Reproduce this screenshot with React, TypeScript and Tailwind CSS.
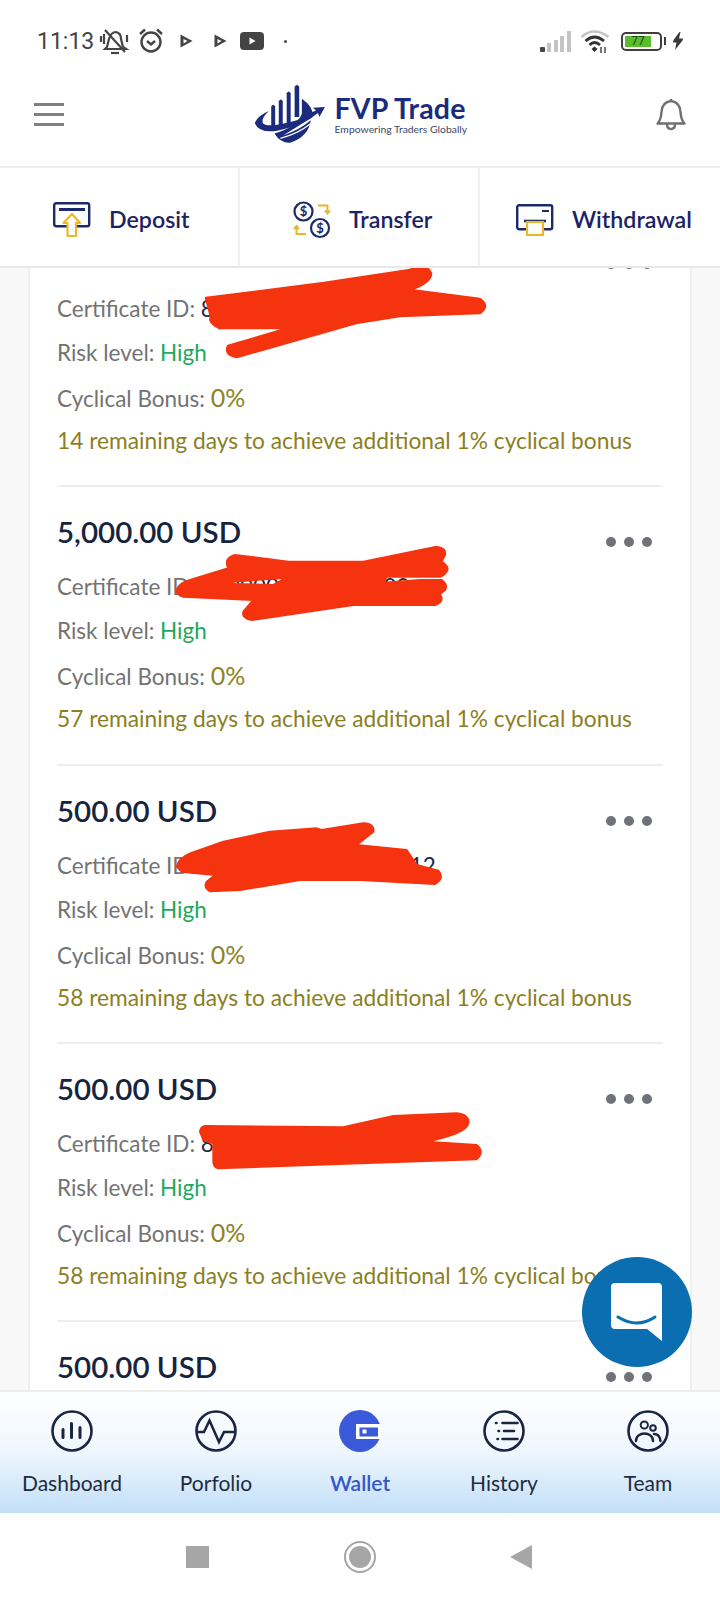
import React from "react";

const rows = [
  { amount: "", id: "8000000000000000", days: 14 },
  { amount: "5,000.00 USD", id: "8000000000000000", days: 57 },
  { amount: "500.00 USD", id: "800000000000000012", days: 58 },
  { amount: "500.00 USD", id: "8000000000000000", days: 58 },
  { amount: "500.00 USD", id: "", days: 0 },
];

const D = "#1a2540";

function Row({ amount, id, days }: { amount: string; id: string; days: number }) {
  return (
    <div className="box-border h-[278.33px] border-b-2 border-[#eeeeee] pt-[26px]">
      <div className="flex h-[38px] items-start justify-between">
        <div className="text-[29.5px] leading-[38px] font-semibold text-[#16243f]">{amount}</div>
        <div className="mt-[24px] mr-[11px] flex gap-[8px]">
          <span className="h-[10px] w-[10px] rounded-full bg-[#6f7377]" />
          <span className="h-[10px] w-[10px] rounded-full bg-[#6f7377]" />
          <span className="h-[10px] w-[10px] rounded-full bg-[#6f7377]" />
        </div>
      </div>
      {id && (
        <div className="mt-[14px] text-[22.5px] leading-[44px] text-[#737373]">
          <div className="h-[44px]">
            Certificate ID: <span className="text-[#1f2a40]">{id}</span>
          </div>
          <div className="h-[44px]">
            Risk level: <span className="text-[#22a85c]">High</span>
          </div>
          <div className="h-[44px]">
            Cyclical Bonus: <span className="text-[25px] text-[#8b8326]">0%</span>
          </div>
          <div className="h-[44px] text-[22.75px] whitespace-nowrap text-[#8b7f1f]">
            {days} remaining days to achieve additional 1% cyclical bonus
          </div>
        </div>
      )}
    </div>
  );
}

function Scribbles() {
  const c = "#f5340f";
  return (
    <svg className="absolute top-0 left-0" width="720" height="1122" viewBox="0 268 720 1122">
      <path
        fill={c}
        stroke={c}
        strokeWidth="2.5"
        strokeLinejoin="round"
        d="M206 298 L324 283 L410 270 Q425 262 431 273 Q432 282 410 290 L480 299 Q490 306 480 313 L400 316 L356 323 L237 357 Q224 355 228 346 L289 328 L219 328 Q208 322 211 317 Z"
      />
      <g transform="translate(160 530) scale(0.3333)" stroke={c} strokeWidth="6" strokeLinejoin="round">
        <path
          fill={c}
          fillRule="evenodd"
          d="M50 180 Q55 160 90 150 L205 115 Q190 85 225 75 L385 95 L610 95 L830 50 Q860 55 855 75 L845 95 Q870 110 860 125 Q850 138 840 140 L680 140 L670 158 L780 150 L845 150 Q865 165 855 180 L840 192 Q855 215 825 225 L580 225 L275 270 Q245 265 250 245 L280 210 L70 200 Q50 195 50 180 Z M215 155 L380 143 L340 165 L225 162 Z"
        />
      </g>
      <g transform="translate(160 800) scale(0.3333)" stroke={c} strokeWidth="6" strokeLinejoin="round">
        <path
          fill={c}
          d="M50 200 Q55 175 90 160 L190 125 L330 95 L470 85 L485 90 L610 70 Q645 72 640 95 L590 135 L740 150 L770 195 L835 212 Q855 235 825 252 L600 240 L420 240 L240 270 L150 274 Q130 262 140 245 L165 225 L65 215 Z"
        />
      </g>
      <g transform="translate(160 1090) scale(0.3333)" stroke={c} strokeWidth="6" strokeLinejoin="round">
        <path
          fill={c}
          d="M120 125 Q122 110 135 108 L550 112 L700 78 L890 70 Q930 75 925 100 Q920 130 800 155 L950 165 Q975 185 950 208 L600 220 L175 235 Q160 230 160 215 L160 160 L130 150 Z"
        />
      </g>
    </svg>
  );
}

function StatusLeft() {
  const s = "#444444";
  return (
    <div className="flex items-center">
      <span className="w-[58px] font-['Roboto'] text-[23px] leading-none text-[#444444]">11:13</span>
      <svg width="32" height="28" viewBox="0 0 32 28" className="ml-[3px]" fill="none" stroke={s} strokeWidth="2.2">
        <path d="M9 20 L11 12 Q13 5 18 5 Q23 6 23 12 L25 20 L28 22 L7 22 Z" />
        <path d="M13 26 H21" />
        <path d="M7 3 L27 25" />
        <path d="M3 9 V15 M6 7 V17 M29 8 V15" />
      </svg>
      <svg width="26" height="26" viewBox="0 0 26 26" className="ml-[8px]" fill="none" stroke={s} strokeWidth="2.4">
        <circle cx="13" cy="14" r="9.5" />
        <path d="M9 13 L13 16.5 L17 13" />
        <path d="M2 6 L7 1.5 M24 6 L19 1.5" />
      </svg>
      <svg width="13" height="14" viewBox="0 0 13 14" className="ml-[16px]">
        <path d="M0.5 0.5 L12.5 7 L0.5 13.5 Z M3.5 5 V9.5 L7.5 7 Z" fill={s} fillRule="evenodd" />
      </svg>
      <svg width="13" height="14" viewBox="0 0 13 14" className="ml-[21px]">
        <path d="M0.5 0.5 L12.5 7 L0.5 13.5 Z M3.5 5 V9.5 L7.5 7 Z" fill={s} fillRule="evenodd" />
      </svg>
      <svg width="24" height="18" viewBox="0 0 24 18" className="ml-[13px]">
        <rect width="24" height="18" rx="4" fill={s} />
        <path d="M9.5 5.5 L15.5 9 L9.5 12.5 Z" fill="#ffffff" />
      </svg>
      <span className="ml-[20px] h-[3px] w-[3px] rounded-full bg-[#444444]" />
    </div>
  );
}

function StatusRight() {
  return (
    <div className="flex items-center">
      <svg width="31" height="21" viewBox="0 0 31 21">
        <rect x="0" y="16" width="5" height="5" rx="1" fill="#444444" />
        <rect x="7" y="12" width="4" height="9" fill="#c4c4c4" />
        <rect x="14" y="9" width="4" height="12" fill="#c4c4c4" />
        <rect x="20" y="5" width="4" height="16" fill="#c4c4c4" />
        <rect x="27" y="0" width="4" height="21" fill="#c4c4c4" />
      </svg>
      <svg width="30" height="24" viewBox="0 0 30 24" className="ml-[9px]" fill="none">
        <path d="M1.5 8 Q14 -3 28.5 8" stroke="#c4c4c4" strokeWidth="2.6" />
        <path d="M5.5 12 Q14.5 4 24 12" stroke="#333333" strokeWidth="2.8" />
        <path d="M9.5 16 Q14.5 11 20 16" stroke="#333333" strokeWidth="2.8" />
        <path d="M11.5 20 L14.5 17.5 L17.5 20 L14.5 23 Z" fill="#333333" />
        <path d="M21 18 V24 M25 18 V24" stroke="#555555" strokeWidth="1.6" />
      </svg>
      <div className="ml-[11px] flex items-center">
        <div className="box-border flex h-[19px] w-[41px] items-center rounded-[5px] border-[2.5px] border-[#3f3f3f] p-[2px]">
          <div className="flex h-full w-[26px] items-center justify-center bg-[#5bbd2e] font-['Roboto'] text-[12px] leading-none text-[#14500c]">
            77
          </div>
        </div>
        <span className="ml-[2px] h-[8px] w-[2px] bg-[#3f3f3f]" />
      </div>
      <svg width="10" height="18" viewBox="0 0 10 18" className="ml-[7px]">
        <path d="M6.5 0 L0.5 8 L0 10.5 H3.5 L2 18 L9.5 8.5 L10 6.5 H6 L7.5 0 Z" fill="#3a3a3a" />
      </svg>
    </div>
  );
}

function Logo() {
  const c = "#1b2b7d";
  return (
    <div className="flex h-[60px] w-[213px] items-center">
      <svg width="72" height="60" viewBox="40 40 218 182" className="shrink-0">
        <g fill={c}>
          <path d="M92 108 Q98 98 104 108 V172 H92 Z" />
          <path d="M115 92 Q121 82 127 92 V165 H115 Z" />
          <path d="M139 68 Q145 58 151 68 V158 H139 Z" />
          <path d="M163 48 Q170 38 177 48 V140 H163 Z" />
          <path d="M185 85 Q222 110 218 140 L128 196 Q180 178 212 150 Q205 200 150 218 Q120 220 102 190 Q170 170 185 130 Z" />
          <path d="M42 158 Q52 135 85 122 Q62 142 66 158 Q80 176 170 150 L228 120 L218 112 L255 110 L238 140 L234 128 Q190 165 110 182 Q55 190 42 158 Z" />
        </g>
        <path d="M120 205 Q175 190 212 160" stroke="#ffffff" strokeWidth="4" fill="none" />
      </svg>
      <div className="ml-[9px] flex flex-col">
        <span className="text-[28.5px] leading-[30px] font-bold tracking-[0.2px] whitespace-nowrap text-[#1b2b7d]">FVP Trade</span>
        <span className="text-[10.4px] leading-[12px] whitespace-nowrap text-[#3d4668]">Empowering Traders Globally</span>
      </div>
    </div>
  );
}

function ActionItem({ icon, label, cls }: { icon: React.ReactNode; label: string; cls: string }) {
  return (
    <div className={`-mt-[6px] flex items-center border-r-2 border-[#f0f0f0] pt-[6px] last:border-r-0 ${cls}`}>
      {icon}
      <span className="text-[23.2px] leading-none font-semibold whitespace-nowrap text-[#1b2363]">{label}</span>
    </div>
  );
}

const DepositIcon = (
  <svg width="38" height="36" viewBox="0 0 38 36" className="mr-[18px] shrink-0" fill="none">
    <rect x="1.2" y="1.2" width="35" height="23" rx="2" stroke="#1b2a6b" strokeWidth="2.4" />
    <path d="M6 7.5 H32" stroke="#1b2a6b" strokeWidth="3" />
    <path d="M19 12 L10.5 21 H14.5 V34 H23 V21 H27 Z" fill="#ffffff" stroke="#eab72a" strokeWidth="2.2" strokeLinejoin="round" />
  </svg>
);

const TransferIcon = (
  <svg width="38" height="38" viewBox="0 0 38 38" className="mr-[18px] shrink-0" fill="none">
    <circle cx="10.5" cy="10.5" r="9" stroke="#1b2a6b" strokeWidth="2.2" />
    <circle cx="27" cy="27" r="9" stroke="#1b2a6b" strokeWidth="2.2" />
    <text x="10.5" y="15" textAnchor="middle" fontSize="13" fontWeight="700" fill="#1b2a6b" fontFamily="Lato">$</text>
    <text x="27" y="31.5" textAnchor="middle" fontSize="13" fontWeight="700" fill="#1b2a6b" fontFamily="Lato">$</text>
    <path d="M25 4.5 H34.5 V12 M32 9.5 L34.5 12.5 L37 9.5" stroke="#eab72a" strokeWidth="2" />
    <path d="M3.5 25 V33 H13 M1 28 L3.5 25 L6 28" stroke="#eab72a" strokeWidth="2" />
  </svg>
);

const WithdrawIcon = (
  <svg width="38" height="32" viewBox="0 0 38 32" className="mr-[18px] shrink-0" fill="none">
    <rect x="1.2" y="1.2" width="35" height="24" rx="2" stroke="#1b2a6b" strokeWidth="2.4" />
    <path d="M26 7 H33" stroke="#1b2a6b" strokeWidth="2" />
    <path d="M8 17 H30" stroke="#1b2a6b" strokeWidth="2.6" />
    <rect x="11" y="18" width="16" height="13" fill="#ffffff" stroke="#eab72a" strokeWidth="2.2" />
  </svg>
);

function NavItem({ icon, label, active }: { icon: React.ReactNode; label: string; active?: boolean }) {
  return (
    <div className="flex flex-col items-center">
      <div className="h-[42px] w-[42px]">{icon}</div>
      <span className={`mt-[15px] text-[21px] leading-[32px] ${active ? "font-semibold text-[#3456c8]" : "text-[#1f2b40]"}`}>{label}</span>
    </div>
  );
}

function Ring({ children }: { children?: React.ReactNode }) {
  return (
    <svg width="42" height="42" viewBox="0 0 42 42" fill="none" stroke={D} strokeWidth="2.6" strokeLinecap="round">
      <circle cx="21" cy="21" r="19.5" />
      {children}
    </svg>
  );
}

export default function App() {
  return (
    <div className="flex h-[1600px] w-[720px] flex-col overflow-hidden bg-white font-['Lato',sans-serif]">
      <div className="flex h-[70px] shrink-0 items-center justify-between pt-[12px] pr-[37px] pl-[37px]">
        <StatusLeft />
        <StatusRight />
      </div>

      <div className="box-border flex h-[98px] shrink-0 items-center justify-between border-b-2 border-[#eeeeee] px-[34px] pb-[8px]">
        <div className="flex h-[23px] w-[30px] flex-col justify-between">
          <span className="h-[3px] bg-[#808080]" />
          <span className="h-[3px] bg-[#808080]" />
          <span className="h-[3px] bg-[#808080]" />
        </div>
        <Logo />
        <svg width="30" height="33" viewBox="0 0 30 33" fill="none" stroke="#707070" strokeWidth="2.4" strokeLinejoin="round">
          <path d="M15 3 Q24 4 24.5 14 Q25 22 28.5 25.5 H1.5 Q5 22 5.5 14 Q6 4 15 3 Z" />
          <path d="M15 1 V3" />
          <path d="M11 26 Q11 31 15 31 Q19 31 19 26" />
        </svg>
      </div>

      <div className="z-10 box-border grid h-[100px] shrink-0 grid-cols-3 border-b-2 border-[#e8e8e8] bg-white pt-[6px]">
        <ActionItem cls="pl-[53px]" icon={DepositIcon} label="Deposit" />
        <ActionItem cls="pl-[53px]" icon={TransferIcon} label="Transfer" />
        <ActionItem cls="pl-[36px]" icon={WithdrawIcon} label="Withdrawal" />
      </div>

      <div className="relative min-h-0 flex-1 overflow-hidden bg-[#f8f8f8]">
        <div className="mx-[28px] -mt-[59px] border-x-2 border-[#efefef] bg-white px-[27px]">
          {rows.map((r, i) => (
            <Row key={i} {...r} />
          ))}
        </div>
        <Scribbles />
        <div className="absolute right-[28px] bottom-[23px] h-[110px] w-[110px] rounded-full bg-[#0a6eb0]">
          <svg width="110" height="110" viewBox="0 0 110 110">
            <path d="M33 26 H76 Q80 26 80 30 V84 L65 72 H33 Q29 72 29 68 V30 Q29 26 33 26 Z" fill="#ffffff" />
            <path d="M36 60 Q55 72 73 60" fill="none" stroke="#0a6eb0" strokeWidth="3" strokeLinecap="round" />
          </svg>
        </div>
      </div>

      <div className="box-border grid h-[123px] shrink-0 grid-cols-5 border-t-2 border-[#eeeeee] bg-gradient-to-b from-white via-[#eef6fd] to-[#c2e0f8] pt-[18px]">
        <NavItem
          label="Dashboard"
          icon={
            <Ring>
              <path d="M12 19.5 V27.5 M20.5 13.5 V27.5 M29 17.5 V27.5" strokeWidth="3" />
            </Ring>
          }
        />
        <NavItem
          label="Porfolio"
          icon={
            <Ring>
              <path d="M1.5 22 H9 L14.5 10.5 L24 32 L29 22 H40.5" strokeLinecap="butt" />
            </Ring>
          }
        />
        <NavItem
          active
          label="Wallet"
          icon={
            <svg width="42" height="42" viewBox="0 0 42 42">
              <circle cx="21" cy="21" r="21" fill="#3a5ad9" />
              <rect x="17" y="14" width="25" height="15" fill="#ffffff" />
              <rect x="20.5" y="17.5" width="18.5" height="9" fill="#3a5ad9" />
              <rect x="23.5" y="19.5" width="4" height="4" fill="#ffffff" />
            </svg>
          }
        />
        <NavItem
          label="History"
          icon={
            <Ring>
              <path d="M13 13 H13.5 M19.5 13 H34.5 M15.5 21 H16 M21 21 H31 M14.5 29 H15 M19.5 29 H34.5" strokeWidth="2.6" />
            </Ring>
          }
        />
        <NavItem
          label="Team"
          icon={
            <Ring>
              <circle cx="17.3" cy="15" r="3.6" strokeWidth="2" />
              <circle cx="26" cy="18" r="2.8" strokeWidth="2" />
              <path d="M9 31 C9 21 26 21 26 31 M27 24 C31 24 33 27 33.5 31" strokeWidth="2.4" />
            </Ring>
          }
        />
      </div>

      <div className="grid h-[87px] shrink-0 grid-cols-[186px_23px_135px_32px_134px_22px] items-center">
        <span />
        <span className="h-[22px] w-[23px] bg-[#a6a6a6]" />
        <span />
        <span className="flex h-[32px] w-[32px] items-center justify-center rounded-full border-[2.5px] border-[#a6a6a6]">
          <span className="h-[22px] w-[22px] rounded-full bg-[#a6a6a6]" />
        </span>
        <span />
        <svg width="22" height="24" viewBox="0 0 22 24">
          <path d="M22 0 V24 L0 12 Z" fill="#a6a6a6" />
        </svg>
      </div>
    </div>
  );
}
